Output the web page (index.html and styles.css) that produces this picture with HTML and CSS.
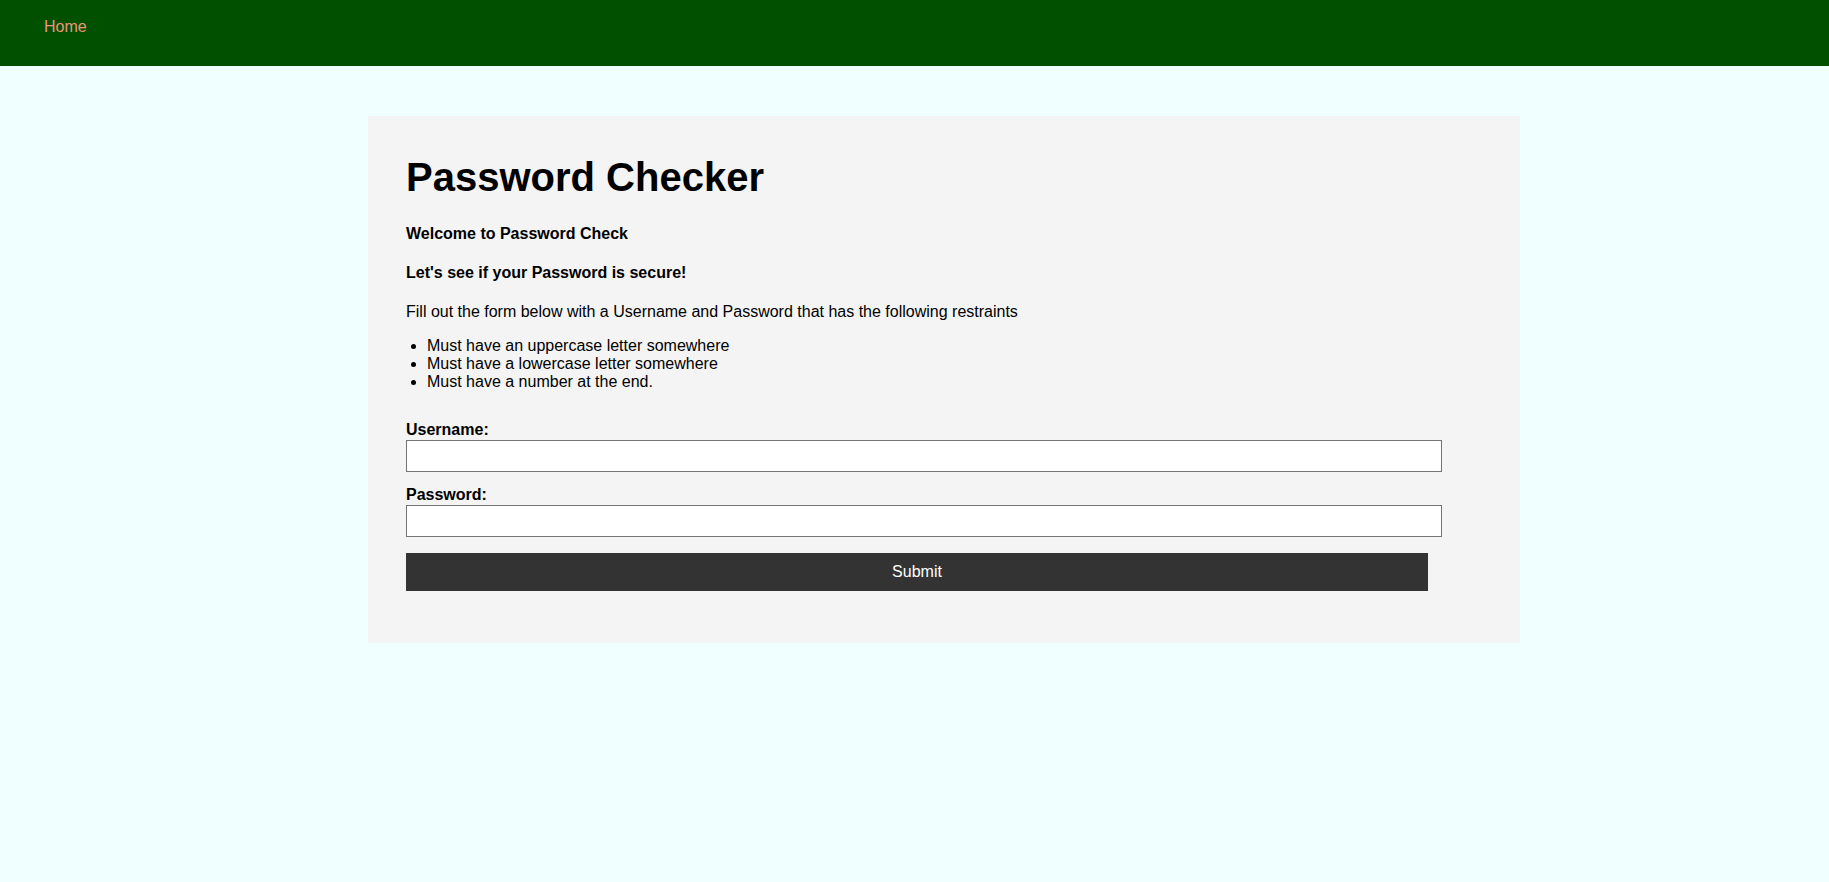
FILE: index.html
```html
<!DOCTYPE html>
<html lang="en">
<head>
<meta charset="utf-8">
<title>Password Checker</title>
<link rel="stylesheet" href="styles.css">
</head>
<body>
<nav class="topbar">
  <a class="nav-link" href="#">Home</a>
</nav>
<main class="card">
  <h1 class="title">Password Checker</h1>
  <h4 class="lead">Welcome to Password Check</h4>
  <h4 class="lead">Let's see if your Password is secure!</h4>
  <p class="intro">Fill out the form below with a Username and Password that has the following restraints</p>
  <ul class="rules">
    <li>Must have an uppercase letter somewhere</li>
    <li>Must have a lowercase letter somewhere</li>
    <li>Must have a number at the end.</li>
  </ul>
  <form class="form">
    <label class="field-label" for="username">Username:</label>
    <input class="field-input" type="text" id="username" name="username">
    <label class="field-label" for="password">Password:</label>
    <input class="field-input" type="password" id="password" name="password">
    <button class="submit" type="submit">Submit</button>
  </form>
</main>
</body>
</html>
```

FILE: styles.css
```css
html, body {
  margin: 0;
  padding: 0;
}

body {
  background: #f0ffff;
  font-family: "Liberation Sans", Arial, sans-serif;
  font-size: 16px;
  color: #000;
}

.topbar {
  background: #005000;
  height: 66px;
  padding: 18px 0 0 44px;
  box-sizing: border-box;
}

.nav-link {
  color: #e9967a;
  text-decoration: none;
  font-size: 16px;
}

.card {
  background: #f4f4f4;
  width: 1152px;
  box-sizing: border-box;
  margin: 50px 0 0 368px;
  padding: 39px 38px 36px 38px;
}

.title {
  font-size: 40px;
  font-weight: bold;
  margin: 0 0 25px 0;
}

.lead {
  font-size: 16px;
  font-weight: bold;
  margin: 21px 0;
}

.title + .lead {
  margin-top: 0;
}

.intro {
  margin: 21px 0 16px 0;
}

.rules {
  margin: 16px 0 0 0;
  padding-left: 21px;
}

.form {
  padding-top: 30px;
  margin: 0 0 16px 0;
}

.field-label {
  display: block;
  font-weight: bold;
  line-height: 18px;
  height: 19px;
}

.field-input {
  display: block;
  box-sizing: border-box;
  width: 1036px;
  height: 32px;
  margin: 0 0 14px 0;
  padding: 1px 2px;
  border: 1px solid #767676;
  background: #fff;
  font-family: inherit;
  font-size: 16px;
}

.submit {
  display: block;
  width: 1022px;
  height: 38px;
  margin-top: 16px;
  background: #333;
  color: #fff;
  border: none;
  font-family: inherit;
  font-size: 16px;
  padding: 0;
}
```
